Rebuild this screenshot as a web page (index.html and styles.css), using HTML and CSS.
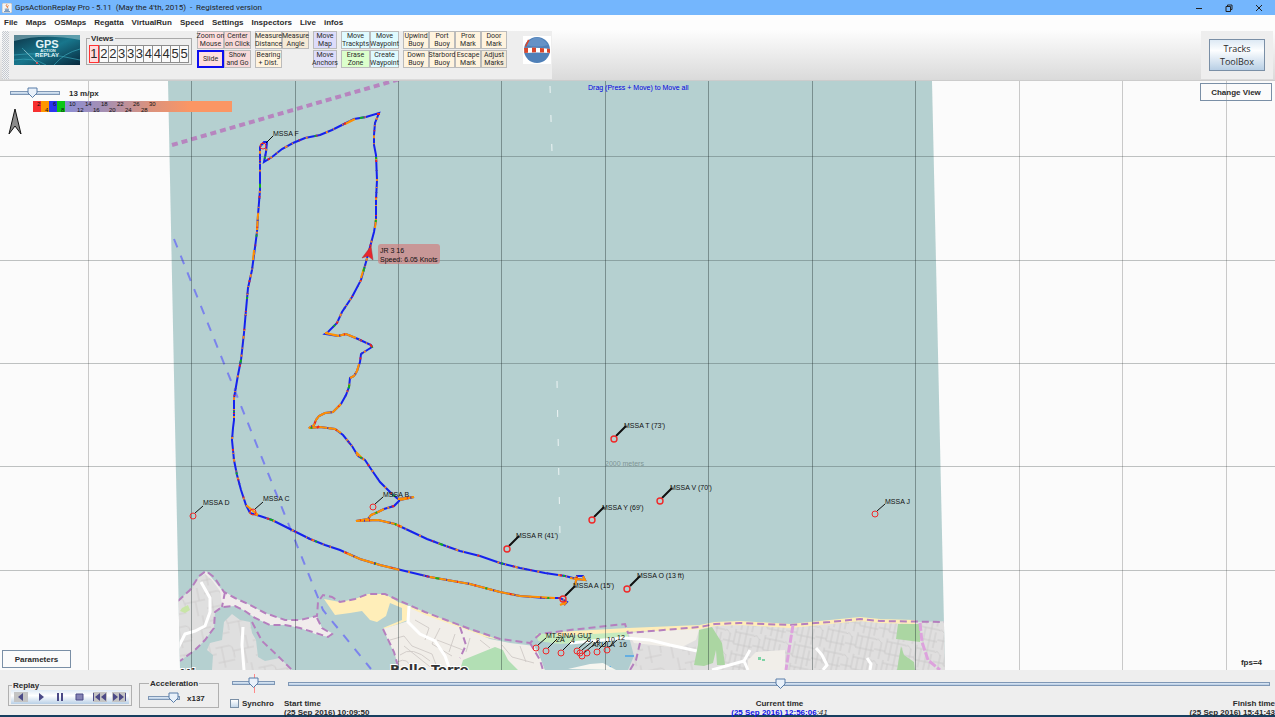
FILE: index.html
```html
<!DOCTYPE html>
<html lang="en">
<head>
    <meta charset="UTF-8">
    <meta name="viewport" content="width=device-width, initial-scale=1.0">
    <title>GpsActionReplay Pro</title>
    <link rel="stylesheet" href="styles.css">
</head>
<body>
    <header class="titlebar">
        <svg class="app-icon" viewBox="0 0 10 10">
            <rect width="10" height="10" rx="1" fill="#f4f4f4" stroke="#999" stroke-width=".6"/>
            <path d="M5 1.2q-1.6 1.5 0 2.6q.9.8 0 1.5M6.4 2.4q-1.2.8-.5 1.8" fill="none" stroke="#e2661a" stroke-width=".9"/>
            <path d="M2.8 6.2h4.2M3 7.4h3.8M2 8.6h6" stroke="#4a76a8" stroke-width=".8"/>
        </svg>
        <span class="title">GpsActionReplay Pro - 5.11 &nbsp;(May the 4'th, 2015) &nbsp;- &nbsp;Registered version</span>
        <div class="window-buttons">
            <button aria-label="Minimize"><svg viewBox="0 0 8 8"><path d="M1 4.5h6"/></svg></button>
            <button aria-label="Restore"><svg viewBox="0 0 8 8"><path d="M1 2.5h4.5v5h-4.500zM2.500 2.500v-1.500h4.500v4.500h-1.500"/></svg></button>
            <button aria-label="Close"><svg viewBox="0 0 8 8"><path d="M1 1l6 6M7 1l-6 6"/></svg></button>
        </div>
    </header>

    <nav class="menubar">
        <a href="#">File</a>
        <a href="#">Maps</a>
        <a href="#">OSMaps</a>
        <a href="#">Regatta</a>
        <a href="#">VirtualRun</a>
        <a href="#">Speed</a>
        <a href="#">Settings</a>
        <a href="#">Inspectors</a>
        <a href="#">Live</a>
        <a href="#">infos</a>
    </nav>

    <div class="toolbar">
        <div class="grip"></div>
        <div class="tools">
            <svg class="logo" viewBox="0 0 66 30">
                <defs>
                    <linearGradient id="logoBg" x1="0" y1="0" x2="1" y2="1">
                        <stop offset="0" stop-color="#0c3245"/>
                        <stop offset=".5" stop-color="#18768c"/>
                        <stop offset="1" stop-color="#07283c"/>
                    </linearGradient>
                </defs>
                <rect width="66" height="30" fill="url(#logoBg)"/>
                <path d="M0 6Q30-2 66 5V0H0z" fill="#8fbcc6" opacity=".6"/>
                <path d="M0 20Q28 16 66 25M8 13L26 30M40 30Q50 18 66 14M0 25Q20 22 32 30" fill="none" stroke="#3aa5b8" stroke-width=".7"/>
                <path d="M10 15L23 28" stroke="#a8c9d2" stroke-width=".6"/>
                <circle cx="23" cy="28" r="1" fill="#f55"/>
                <text x="33" y="13" text-anchor="middle" class="logo-big">GPS</text>
                <text x="34" y="17" text-anchor="middle" class="logo-small">ACTION</text>
                <text x="33" y="22" text-anchor="middle" class="logo-mid">REPLAY</text>
            </svg>

            <fieldset class="views">
                <legend>Views</legend>
                <button class="selected">1</button><button>2</button><button>2</button><button>3</button><button>3</button><button>3</button><button>4</button><button>4</button><button>4</button><button>5</button><button>5</button>
            </fieldset>

            <div class="group pink">
                <button>Zoom on<br>Mouse</button>
                <button class="dim">Center<br>on Click</button>
                <button class="active">Slide</button>
                <button class="dim">Show<br>and Go</button>
            </div>
            <div class="group cream">
                <button>Measure<br>Distance</button>
                <button class="dim">Measure<br>Angle</button>
                <button>Bearing<br>+ Dist.</button>
            </div>
            <div class="group lilac single">
                <button>Move<br>Map</button>
                <button>Move<br>Anchors</button>
            </div>
            <div class="group cyan wide">
                <button>Move<br>Trackpts</button>
                <button>Move<br>Waypoint</button>
                <button class="green">Erase<br>Zone</button>
                <button>Create<br>Waypoint</button>
            </div>
            <div class="group cream four">
                <button>Upwind<br>Buoy</button>
                <button>Port<br>Buoy</button>
                <button>Prox<br>Mark</button>
                <button>Door<br>Mark</button>
                <button>Down<br>Buoy</button>
                <button>Starbord<br>Buoy</button>
                <button>Escape<br>Mark</button>
                <button class="dim">Adjust<br>Marks</button>
            </div>

            <svg class="globe" viewBox="0 0 28 28">
                <rect width="28" height="28" fill="#fff"/>
                <circle cx="14" cy="14" r="13" fill="#4f80b8"/>
                <path d="M3 9Q14-6 25 9Q14 12 3 9z" fill="#6592c6"/>
                <path d="M1 12Q14 11 27 13L27 17Q14 16 2 17z" fill="#fff"/>
                <path d="M1 12l4-.3v5l-3.500.3zM9 11.600l4 .1v4.600l-4 .1zM17 12l4 .2v4.300l-4-.1zM24 12.600l3 .3v4l-3-.3z" fill="#d9462a"/>
                <path d="M2 10L5 3.500l1.500 1L3 11z" fill="#d9462a"/>
            </svg>
        </div>
        <div class="toolbox">
            <button>Tracks<br>ToolBox</button>
        </div>
    </div>

    <main class="map">
        <svg class="chart" viewBox="0 81 1275 589" preserveAspectRatio="xMinYMin slice">
            <defs>
                <clipPath id="sea"><path d="M168 81H932L945 670H180z"/></clipPath>
                <pattern id="streets" width="38" height="28" patternUnits="userSpaceOnUse" patternTransform="rotate(-12)">
                    <path d="M0 7H14Q18 8 17 20M17 13H38M28 13V28M6 7V28M0 22H17M32 0V13" fill="none" stroke="#cbc9c9" stroke-width=".8"/>
                </pattern>
                <pattern id="blocks" width="30" height="22" patternUnits="userSpaceOnUse" patternTransform="rotate(12)">
                    <path d="M0 4C3 0 5 7 6 5V22M11 0V15H30M16 3V22M22 0V22M27 6V22M0 13H11M11 3H30" fill="none" stroke="#c8c6c6" stroke-width=".8"/>
                </pattern>
                <path id="track" d="M564 605L567 602L560 598L545 598L520 596L500 592L470 584L430 577L405 571L380 565L360 559L340 550L325 545L310 539L296 532L284 526L272 520L260 516L250 513L246 505L241 490L237 475L234 460L233 450L232 440L233 428L234 420L234 398L238 375L241 360L244 333L246 310L248 288L252 270L254 255L257 232L258 215L260 190L260 165L260 147L264 142L267 142L266 152L264 162L272 157L282 149L293 143L305 138L320 135L332 130L342 125L354 119L366 117L379 113L375 123L374 135L374 145L376 155L377 180L376 200L376 220L374 232L370 247L366 262L361 280L352 297L342 312L337 323L328 332L325 334L338 336L346 334L358 339L371 345L372 347L361 354L360 362L357 371L354 376L350 378L349 387L346 395L341 404L333 412L325 413L319 416L316 420L314 425L309 428L320 427L335 429L343 435L352 446L358 456L365 460L371 469L380 482L391 493L398 499L414 497L400 500L394 506L384 509L378 512L371 515L368 519L356 521L378 520L395 524L410 531L427 539L443 545L460 551L480 556L500 563L520 568L545 573L565 576L577 579L585 580L583 576L577 576L575 585"/>
            </defs>
            <rect y="81" width="1275" height="589" fill="#fbfbfb"/>

            <g clip-path="url(#sea)">
                <rect x="160" y="81" width="790" height="589" fill="#b5d0d0"/>

                <!-- land -->
                <path d="M206 571L222 590L235 598L250 605L265 613L285 620L300 620L317 616L322 628L332 633L330 637L318 635L300 628L285 625L270 625L255 618L245 611L235 606L222 607L210 600L195 584z" fill="#f1ecec"/>
                <path d="M176 603L190 590L199 577L205 574L212 580L220 591L222 606L215 612L214 628L205 640L195 650L180 661L170 664z" fill="#dfdfdf"/>
                <path d="M176 603L190 590L199 577L205 574L212 580L220 591L222 606L215 612L214 628L205 640L195 650L180 661z" fill="url(#streets)"/>
                <path d="M182 608l6-3 2 5-5 3-5-2z" fill="#c8e5a6"/>
                <path d="M232 614L240 620L250 622L252 633L256 640L258 657L265 661L280 658L292 670H212L213 655L207 650L210 643L222 640L224 622z" fill="#dfdfdf"/>
                <path d="M232 614L240 620L250 622L252 633L256 640L258 657L265 661L280 658L292 670H212L213 655L207 650L210 643L222 640L224 622z" fill="url(#streets)"/>
                <path d="M324 599L340 602L355 599L368 594L385 594L398 602L425 612L470 630L500 640L470 634L425 617L408 610V620L385 629L383 628L402 620L402 608L390 603L386 616L377 622L370 620L362 611L350 613L335 615z" fill="#ffeeb9"/>
                <path d="M383 629L408 621V607L425 615L470 631L490 639L510 643L535 646L540 655L545 670H399L395 655z" fill="#f1eee9"/>
                <path d="M390 640l14-4 8 10 20 8 6 16M400 655q12-10 30 6M415 620l14 8-4 12M440 628l-8 16 20 12M455 634l-6 18M470 638l-4 14M397 662q12 -6 14 8M404 646l30 24M480 640l10 8M502 645l10 12 22 6M520 646l6 16M437 640l26 10" fill="none" stroke="#cfcac6" stroke-width=".9"/>
                <path d="M463 660L495 647L503 650L508 660L518 670H460z" fill="#b2dfb4"/>
                <path d="M536 634L600 632L628 630L628 641L580 643L540 646z" fill="#c6ebbf"/>
                <path d="M530 640L560 644L632 639L636 650L630 670H545L538 652z" fill="#b0cdd0"/>
                <path d="M628 633L700 627L715 624L740 623L790 625L830 622L860 619L880 621L915 622L950 621V670H628L634 656z" fill="#e0dfdf"/>
                <path d="M628 633L700 627L696 640L680 648L634 643z" fill="#f1eee9"/>
                <path d="M715 624L790 625L830 622L860 619L915 622L945 621V670H720z" fill="url(#blocks)"/>
                <path d="M640 646H696V670H628z" fill="url(#streets)"/>
                <path d="M570 643L625 638L650 640L670 645L697 651" fill="none" stroke="#fff" stroke-width="3"/>
                <path d="M557 634L628 630L700 627L715 624L740 623L790 626L830 622L860 619L880 621L915 622" fill="none" stroke="#ffedb8" stroke-width="4"/>
                <path d="M699 630L712 627L722 643L725 665L717 665L716 650L713 663L704 666L694 665L698 645z" fill="#abd6a2"/>
                <path d="M898 624H920V642L896 639zM901 646L904 655L914 662L915 670H897z" fill="#abd6a2"/>
                <path d="M748 660L756 652L785 650V670H748z" fill="#f1eee9"/>
                <path d="M758 657h3v3h-3zM762 659h3v2h-3z" fill="#7ed3a4"/>
                <path d="M201 582L210 598L210 612L205 626L195 631L185 634L178 648M243 627L242 645L244 670M409 606L408 622L420 634L435 641L445 656L450 670M712 670L744 661L750 650M744 661L748 670M816 648L822 655L827 665L823 670M867 658L871 664L870 670" fill="none" stroke="#fff" stroke-width="3"/>

                <!-- borders -->
                <g fill="none" stroke="#b57fbe" stroke-width="2" stroke-dasharray="7 4">
                    <path d="M178 601L190 590L199 576L206 571L214 577L224 592L235 598L250 605L265 613L285 620L300 620L317 616L318 602L323 595L332 597L340 602L355 599L368 594L385 594L398 600L425 612L470 629L500 639L530 643L540 634L570 630L625 624L628 633L700 627L715 624L740 623L790 625L830 622L860 619L880 621L945 622"/>
                    <path d="M317 618L322 628L332 634L328 637L300 628L285 625L270 625L255 618L245 611L235 606L222 607L215 612L214 628L205 640L195 650L180 661M252 622L262 641L278 656L292 670M383 629L394 652L399 670M460 627L466 645L460 658M530 643L540 660L543 670M640 643L636 660L630 670M225 592L222 607"/>
                </g>
                <path d="M793 625L789 650L786 670M920 623L922 642L928 660L940 670" fill="none" stroke="#dda2dd" stroke-width="3" stroke-dasharray="8 2"/>
                <path d="M172 145L400 79" stroke="#b785bf" stroke-width="4" stroke-dasharray="6 4"/>
                <path d="M174 239L323 610L371 669" fill="none" stroke="#7b83ec" stroke-width="2" stroke-dasharray="9 9"/>
                <path d="M550 86L552 152M557 381L560 535" stroke="#eef5f5" stroke-width="1" stroke-dasharray="7 22"/>
                <path d="M579 668h11M603 667h8M625 656h9" stroke="#1690f5" stroke-width="1"/>
                <path d="M568 669L590 664L603 663L616 670z" fill="#f6f6f0"/>
                <text x="390" y="674" class="town">Belle Terre</text>
                <text x="180" y="678" class="town">Hi</text>
            </g>

            <!-- grid -->
            <path d="M88.500 81V670M1019.500 81V670M1122.500 81V670M1226.500 81V670" stroke="#c9c9c9"/>
            <path d="M191.500 81V670M295.500 81V670M398.500 81V670M501.500 81V670M605.500 81V670M708.500 81V670M812.500 81V670M915.500 81V670" stroke="#202c2c" stroke-opacity=".4"/>
            <path d="M0 156.500H1275M0 260.500H1275M0 363.500H1275M0 466.500H1275M0 570.500H1275" stroke="#202c2c" stroke-opacity=".28"/>
            <text x="605" y="466" class="scale-text">2000 meters</text>

            <!-- gps track, coloured by speed -->
            <g class="track">
                <use href="#track" stroke="#1522ee"/>
                <use href="#track" stroke="#f5821f" stroke-dasharray="2 6 1 9 3 5 1 14 2 19"/>
                <path stroke="#ff9100" d="M560 605L567 602M555 598L520 596L500 592L470 584L430 577M400 570L380 565L360 559L344 552M258 515L246 505M376 219L375 228M364 268L361 278M340 336L325 333L338 336L346 334L356 338M359 364L357 371L354 376L350 378M341 404L333 412L325 413L319 416L316 420L314 425L309 428L320 427L335 429L341 433M356 452L364 460M398 499L414 497L400 500M384 509L378 512L371 515L368 519L356 521L378 520L395 524L402 527M570 578L577 579L585 580L583 576M577 576L575 585M345 124L355 119M258 214L257 230M254 250L253 260"/>
                <use href="#track" stroke="#12b01c" stroke-dasharray="0 23 2 61 2 47 4 38"/>
                <use href="#track" stroke="#ee2222" stroke-dasharray="0 13 1 17 1 29 2 22"/>
                <use href="#track" stroke="#3a30c0" stroke-dasharray="0 9 1 21 1 16"/>
                <path stroke="#ee2222" d="M370 344L372 347M317 428L319 426M377 114H380"/>
            </g>

            <!-- waypoints -->
            <g class="marks">
                <path d="M266 143L273 136M195 513L203 506M255 509L263 502M375 504L383 497M877 511L885 504M538 645L546 638M548 648L557 639M563 650L571 642M579 648L588 640M582 650L593 641M584 653L598 641M599 649L607 641M608 648L617 640"/>
                <path class="double" d="M616 436L626 426M594 517L604 507M662 498L672 488M509 546L519 536M565 596L575 586M630 586L640 576"/>
                <g class="rings">
                    <circle cx="263" cy="146" r="3"/><circle cx="193" cy="516" r="3"/><circle cx="253" cy="512" r="3"/>
                    <circle cx="373" cy="507" r="3"/><circle cx="875" cy="514" r="3"/>
                    <circle cx="536" cy="648" r="3"/><circle cx="546" cy="651" r="3"/><circle cx="561" cy="653" r="3"/>
                    <circle cx="577" cy="651" r="3"/><circle cx="580" cy="653" r="3"/><circle cx="582" cy="656" r="3"/>
                    <circle cx="587" cy="653" r="3"/><circle cx="597" cy="652" r="3"/><circle cx="607" cy="650" r="3"/>
                </g>
                <g class="rings" stroke-width="1.4">
                    <circle cx="614" cy="439" r="3"/><circle cx="592" cy="520" r="3"/><circle cx="660" cy="501" r="3"/>
                    <circle cx="507" cy="549" r="3"/><circle cx="563" cy="599" r="3"/><circle cx="627" cy="589" r="3"/>
                </g>
                <text x="273" y="136">MSSA F</text>
                <text x="203" y="505">MSSA D</text>
                <text x="263" y="501">MSSA C</text>
                <text x="383" y="497">MSSA B</text>
                <text x="885" y="504">MSSA J</text>
                <text x="624" y="428">MSSA T (73')</text>
                <text x="602" y="510">MSSA Y (69')</text>
                <text x="670" y="490">MSSA V (70')</text>
                <text x="516" y="538">MSSA R (41')</text>
                <text x="573" y="588">MSSA A (15')</text>
                <text x="637" y="578">MSSA O (13 ft)</text>
                <text x="546" y="638">MT.SINAI GUT</text>
                <text x="556" y="642">2A</text>
                <text x="571" y="643">4</text>
                <text x="587" y="642">6</text>
                <text x="596" y="643">8</text>
                <text x="592" y="647">AKULA</text>
                <text x="607" y="642">10</text>
                <text x="617" y="640">12</text>
                <text x="619" y="647">16</text>
            </g>

            <!-- boat -->
            <path d="M371 246L373 260L368 256L362 258z" fill="#e8262c" stroke="#a3333a" stroke-width=".5"/>
            <rect x="378" y="244" width="62" height="20" rx="3" fill="#d27878" fill-opacity=".65"/>
            <text x="380" y="253" class="boat-name">JR 3 16</text>
            <text x="380" y="262" class="boat-name">Speed: 6.05 Knots</text>
            <text x="588" y="90" class="hint">Drag (Press + Move) to Move all</text>
        </svg>

        <div class="map-scale">
            <input type="range" id="zoom" min="0" max="100" value="42">
            <label for="zoom">13 m/px</label>
        </div>
        <svg class="speeds" viewBox="0 0 199 11">
            <defs>
                <linearGradient id="fast">
                    <stop offset="0" stop-color="#8c8ed4"/>
                    <stop offset=".25" stop-color="#a78fb0"/>
                    <stop offset=".5" stop-color="#d9927f"/>
                    <stop offset=".75" stop-color="#fb9664"/>
                </linearGradient>
            </defs>
            <rect width="8" height="11" fill="#f73030"/>
            <rect x="8" width="8" height="11" fill="#ff9600"/>
            <rect x="16" width="8" height="11" fill="#2b35f0"/>
            <rect x="24" width="8" height="11" fill="#0cc716"/>
            <rect x="32" width="167" height="11" fill="url(#fast)"/>
            <text x="4" y="5">2</text><text x="20" y="5">6</text><text x="36" y="5">10</text><text x="52" y="5">14</text>
            <text x="68" y="5">18</text><text x="84" y="5">22</text><text x="100" y="5">26</text><text x="116" y="5">30</text>
            <text x="12" y="11">4</text><text x="28" y="11">8</text><text x="44" y="11">12</text><text x="60" y="11">16</text>
            <text x="76" y="11">20</text><text x="92" y="11">24</text><text x="108" y="11">28</text>
        </svg>
        <svg class="north" viewBox="0 0 14 28">
            <path d="M7 1L13 26L7 18L1 26z" fill="#8b8b8b" stroke="#111" stroke-width="1"/>
        </svg>
        <button class="plain change-view">Change View</button>
        <button class="plain parameters">Parameters</button>
        <span class="fps">fps=4</span>
    </main>

    <footer class="replay-bar">
        <fieldset class="panel replay">
            <legend>Replay</legend>
            <button class="off" aria-label="Step back"><svg viewBox="0 0 14 10"><path d="M9 1v8L4 5zM10 1v8"/></svg></button>
            <button aria-label="Play"><svg viewBox="0 0 14 10"><path d="M5 1v8l5-4z"/></svg></button>
            <button aria-label="Pause"><svg viewBox="0 0 14 10"><path d="M4 1h2v8h-2zM8 1h2v8h-2z"/></svg></button>
            <button aria-label="Stop"><svg viewBox="0 0 14 10"><path d="M3 2h7v6h-7z" class="stop"/></svg></button>
            <button class="off" aria-label="Go to start"><svg viewBox="0 0 14 10"><path d="M0 1h1v8h-1zM7 1v8L2 5zM13 1v8L8 5z"/></svg></button>
            <button class="off" aria-label="Go to end"><svg viewBox="0 0 14 10"><path d="M1 1v8l5-4zM7 1v8l5-4zM13 1h1v8h-1z"/></svg></button>
        </fieldset>
        <fieldset class="panel acceleration">
            <legend>Acceleration</legend>
            <input type="range" id="accel" min="0" max="100" value="99">
            <label for="accel">x137</label>
        </fieldset>
        <div class="sync">
            <input type="range" aria-label="Jog" min="0" max="100" value="50">
            <label><input type="checkbox"> Synchro</label>
        </div>
        <div class="timeline">
            <input type="range" aria-label="Current time" min="0" max="1000" value="502">
            <div class="times">
                <div>Start time<br>(25 Sep 2016) 10:09:50</div>
                <div class="current">Current time<br><b>(25 Sep 2016) 12:56:06</b><i>:41</i></div>
                <div class="finish">Finish time<br>(25 Sep 2016) 15:41:43</div>
            </div>
        </div>
    </footer>
</body>
</html>
```

FILE: styles.css
```css
* {
    box-sizing: border-box;
}
body {
    margin: 0;
    height: 100vh;
    display: flex;
    flex-direction: column;
    overflow: hidden;
    background: #eee;
    color: #2b2b2b;
    font: bold 8px/9px "Liberation Sans", Arial, sans-serif;
}
button {
    font: inherit;
    color: inherit;
    padding: 0;
    margin: 0;
    border: none;
    background: none;
    white-space: nowrap;
}
fieldset {
    margin: 0;
    min-width: 0;
}

/* title and menu */
.titlebar {
    display: flex;
    align-items: center;
    height: 15px;
    padding: 0 12px 0 2px;
    background: #74b6fd;
    flex-shrink: 0;
}
.app-icon {
    width: 10px;
    height: 10px;
    margin-right: 3px;
}
.title {
    flex: 1;
    font: 8px/15px Roboto, sans-serif;
    color: #222;
}
.window-buttons {
    display: flex;
    gap: 22px;
}
.window-buttons svg {
    display: block;
    width: 8px;
    height: 8px;
    fill: none;
    stroke: #222;
}
.menubar {
    display: flex;
    gap: 8px;
    height: 15px;
    padding-left: 4px;
    background: #fdfdfd;
    line-height: 15px;
    flex-shrink: 0;
}
.menubar a {
    color: #2b2b2b;
    text-decoration: none;
}

/* toolbar */
.toolbar {
    display: flex;
    height: 51px;
    padding: 1px 2px;
    background: linear-gradient(#fdfdfd, #dadada);
    border-bottom: 1px solid #ccc;
    flex-shrink: 0;
}
.grip {
    width: 7px;
    background: repeating-conic-gradient(#c4c9d0 0 25%, #f4f4f4 0 50%) 0 0 / 2px 2px;
}
.tools {
    display: flex;
    align-items: flex-start;
    width: 543px;
    padding-left: 5px;
    background: #eee;
}
.logo {
    width: 66px;
    height: 30px;
    margin: 4px 6px 0 0;
}
.logo text {
    fill: #e3f5f8;
    font-weight: bold;
}
.logo .logo-big {
    font-size: 11px;
}
.logo .logo-mid {
    font-size: 6px;
}
.logo .logo-small {
    font-size: 4px;
}
.views {
    display: flex;
    padding: 2px 2px 1px;
    border: 1px solid #a9a9a9;
    width: 106px;
    margin: 3px 5px 0 0;
}
.views legend {
    padding: 0 1px;
    margin-left: 1px;
}
.views button {
    flex: 1;
    height: 18px;
    border: 1px solid #8e8e8e;
    border-right-width: 0;
    background: #fafafa;
    font: 13px/16px "Liberation Sans", Arial, sans-serif;
}
.views button:last-child {
    border-right-width: 1px;
}
.views .selected {
    border: 1px solid #f33;
    background: #ffdcdc;
}
.group {
    display: grid;
    grid-template-columns: repeat(2, 27px);
    grid-auto-rows: 18px;
    gap: 1px 0;
    margin-right: 4px;
}
.group.single {
    grid-template-columns: 24px;
}
.group.wide {
    grid-template-columns: repeat(2, 29px);
}
.group.four {
    grid-template-columns: repeat(4, 26px);
}
.group button {
    border: 1px solid #bbb;
    font: 7px/8px Roboto, sans-serif;
    display: flex;
    align-items: center;
    justify-content: center;
    text-align: center;
}
.pink button {
    background: #ffdfdf;
}
.cream button {
    background: #fff3de;
}
.lilac button {
    background: #dddcfb;
}
.cyan button {
    background: #dffbff;
}
.cyan .green {
    background: #dcffcc;
}
.pink .dim {
    background: #f8d9d9;
}
.cream .dim {
    background: #f5ead6;
}
.group .active {
    border: 2px solid #0d0df0;
}
.globe {
    width: 28px;
    height: 28px;
    margin: 5px 0 0 12px;
}
.toolbox {
    margin-left: auto;
    width: 72px;
    padding: 8px;
    background: #eee;
}
.toolbox button {
    width: 100%;
    height: 32px;
    border: 1px solid #7a8fa6;
    background: linear-gradient(#dde9f4, #fdfeff 35%, #b8cfe5);
    font: 9px/13px "Open Sans", sans-serif;
}

/* map */
.map {
    position: relative;
    flex: 1;
    min-height: 0;
    background: #fbfbfb;
}
.chart {
    display: block;
    width: 100%;
    height: 100%;
}
.town {
    font: bold 13px "DejaVu Sans", sans-serif;
    fill: #333;
    stroke: #fff;
    stroke-width: 2px;
    paint-order: stroke;
}
.scale-text {
    font: 7px "Liberation Sans", Arial, sans-serif;
    fill: #7f9595;
}
.track {
    fill: none;
    stroke-width: 2px;
}
.marks {
    fill: none;
    stroke: #111;
}
.marks .double {
    stroke-width: 2px;
}
.rings {
    stroke: #f02828;
}
.marks text,
.boat-name {
    font: 7px "Liberation Sans", Arial, sans-serif;
    fill: #111;
    stroke: none;
}
.hint {
    font: 7px "Liberation Sans", Arial, sans-serif;
    fill: #0000e0;
}
.map-scale {
    position: absolute;
    left: 10px;
    top: 6px;
    display: flex;
    align-items: center;
    gap: 9px;
}
.map-scale input {
    width: 50px;
}
.speeds {
    position: absolute;
    left: 33px;
    top: 20px;
    width: 199px;
    height: 11px;
}
.speeds text {
    font: 6px "Liberation Sans", Arial, sans-serif;
    fill: #111;
}
.north {
    position: absolute;
    left: 8px;
    top: 27px;
    width: 14px;
    height: 28px;
}
.plain {
    position: absolute;
    height: 18px;
    border: 1px solid #7a8fa6;
}
.change-view {
    top: 2px;
    right: 3px;
    width: 72px;
}
.parameters {
    left: 2px;
    bottom: 2px;
    width: 69px;
}
.fps {
    position: absolute;
    right: 13px;
    bottom: 3px;
}

/* sliders */
input[type="range"] {
    appearance: none;
    display: block;
    margin: 0;
    height: 12px;
    background: none;
}
input[type="range"]::-webkit-slider-runnable-track {
    height: 4px;
    border: 1px solid #7f97b5;
    background: linear-gradient(#dfe9f4, #b3cae3);
}
input[type="range"]::-webkit-slider-thumb {
    appearance: none;
    width: 11px;
    height: 11px;
    margin-top: -5px;
    background: url("data:image/svg+xml,%3Csvg xmlns='http://www.w3.org/2000/svg' viewBox='0 0 11 11'%3E%3Cpath d='M1 1h9v5l-4.5 4.500L1 6z' fill='%23e9f1fa' stroke='%23597da8'/%3E%3C/svg%3E");
}

/* bottom bar */
.replay-bar {
    display: flex;
    align-items: flex-start;
    height: 47px;
    padding: 0 0 0 8px;
    border-bottom: 2px solid #173f5f;
    flex-shrink: 0;
}
.panel {
    display: flex;
    align-items: center;
    border: 1px solid #b0b0b0;
    padding: 0 2px 1px;
}
.panel legend {
    padding: 0 1px;
    margin-left: 1px;
}
.replay {
    width: 124px;
    margin-top: 11px;
}
.replay button {
    flex: 1;
    height: 14px;
    display: flex;
    align-items: center;
    justify-content: center;
    background: linear-gradient(#dfeaf5, #fff 40%, #b9d0e7);
}
.replay svg {
    width: 14px;
    height: 10px;
    fill: #4b4a87;
}
.replay .off svg {
    background: #c4c4c4;
}
.replay .stop {
    fill: #8583b5;
    stroke: #4b4a87;
}
.acceleration {
    width: 80px;
    margin: 9px 13px 0 7px;
    padding: 4px 8px 3px;
    gap: 7px;
}
.acceleration input {
    width: 32px;
}
.sync {
    width: 43px;
    background: linear-gradient(#f88, #f88) 22px 4px / 1px 19px no-repeat;
}
.sync input[type="range"] {
    width: 43px;
    margin: 7px 0 10px;
}
.sync label {
    display: flex;
    align-items: center;
    gap: 3px;
    margin-left: -2px;
}
.sync input[type="checkbox"] {
    appearance: none;
    flex: none;
    width: 9px;
    height: 9px;
    margin: 0;
    border: 1px solid #7a8fa6;
    background: linear-gradient(#fff, #c3d7eb);
}
.timeline {
    flex: 1;
    padding: 8px 0 0 9px;
}
.timeline input {
    width: calc(100% - 9px);
    margin-left: 4px;
}
.times {
    display: grid;
    grid-template-columns: 1fr 1fr 1fr;
    margin-top: 9px;
}
.current {
    text-align: center;
}
.current b {
    color: #1010e6;
}
.current i {
    font-weight: normal;
}
.finish {
    text-align: right;
}
```
